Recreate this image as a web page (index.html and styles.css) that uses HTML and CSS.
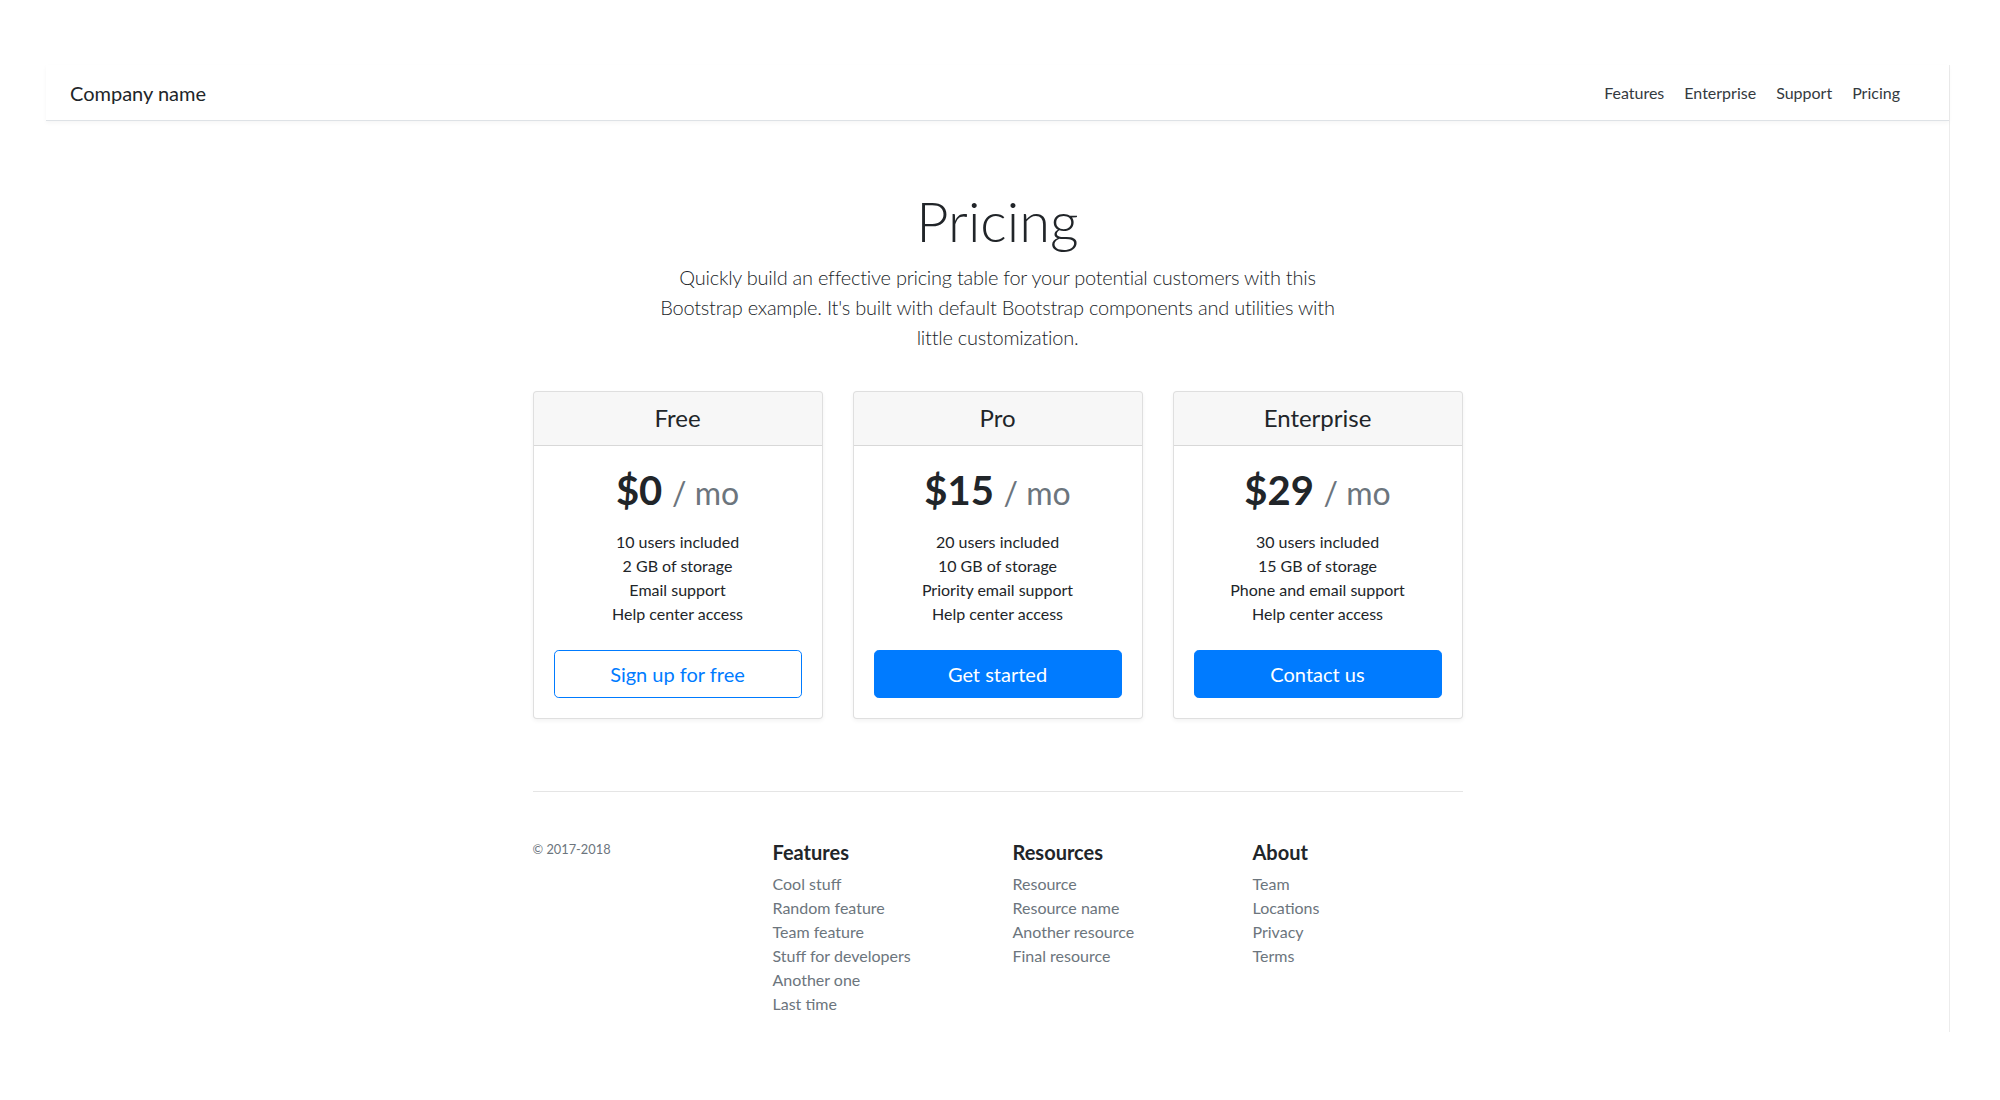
FILE: index.html
```html
<!DOCTYPE html>
<html lang="en">
<head>
<meta charset="utf-8">
<title>Pricing example</title>
<link rel="stylesheet" href="styles.css">
</head>
<body>
<div class="frame">
  <header class="navbar">
    <h5 class="brand">Company name</h5>
    <nav class="nav">
      <a class="nav-link" href="#">Features</a>
      <a class="nav-link" href="#">Enterprise</a>
      <a class="nav-link" href="#">Support</a>
      <a class="nav-link" href="#">Pricing</a>
    </nav>
  </header>

  <section class="pricing-header">
    <h1 class="display">Pricing</h1>
    <p class="lead">Quickly build an effective pricing table for your potential customers with this<br>Bootstrap example. It's built with default Bootstrap components and utilities with<br>little customization.</p>
  </section>

  <div class="container">
    <div class="deck">
      <div class="card">
        <div class="card-header"><h4>Free</h4></div>
        <div class="card-body">
          <h1 class="price">$0 <small>/ mo</small></h1>
          <ul class="features">
            <li>10 users included</li>
            <li>2 GB of storage</li>
            <li>Email support</li>
            <li>Help center access</li>
          </ul>
          <button type="button" class="btn btn-outline">Sign up for free</button>
        </div>
      </div>
      <div class="card">
        <div class="card-header"><h4>Pro</h4></div>
        <div class="card-body">
          <h1 class="price">$15 <small>/ mo</small></h1>
          <ul class="features">
            <li>20 users included</li>
            <li>10 GB of storage</li>
            <li>Priority email support</li>
            <li>Help center access</li>
          </ul>
          <button type="button" class="btn btn-primary">Get started</button>
        </div>
      </div>
      <div class="card">
        <div class="card-header"><h4>Enterprise</h4></div>
        <div class="card-body">
          <h1 class="price">$29 <small>/ mo</small></h1>
          <ul class="features">
            <li>30 users included</li>
            <li>15 GB of storage</li>
            <li>Phone and email support</li>
            <li>Help center access</li>
          </ul>
          <button type="button" class="btn btn-primary">Contact us</button>
        </div>
      </div>
    </div>

    <footer class="footer">
      <div class="footer-col">
        <small class="copy">&copy; 2017-2018</small>
      </div>
      <div class="footer-col">
        <h5>Features</h5>
        <ul class="links">
          <li><a href="#">Cool stuff</a></li>
          <li><a href="#">Random feature</a></li>
          <li><a href="#">Team feature</a></li>
          <li><a href="#">Stuff for developers</a></li>
          <li><a href="#">Another one</a></li>
          <li><a href="#">Last time</a></li>
        </ul>
      </div>
      <div class="footer-col">
        <h5>Resources</h5>
        <ul class="links">
          <li><a href="#">Resource</a></li>
          <li><a href="#">Resource name</a></li>
          <li><a href="#">Another resource</a></li>
          <li><a href="#">Final resource</a></li>
        </ul>
      </div>
      <div class="footer-col">
        <h5>About</h5>
        <ul class="links">
          <li><a href="#">Team</a></li>
          <li><a href="#">Locations</a></li>
          <li><a href="#">Privacy</a></li>
          <li><a href="#">Terms</a></li>
        </ul>
      </div>
    </footer>
  </div>
</div>
</body>
</html>
```

FILE: styles.css
```css
* { box-sizing: border-box; }

html, body {
  margin: 0;
  padding: 0;
  background: #fff;
}

body {
  font-family: "Lato", "Open Sans", "Noto Sans", sans-serif;
  font-size: 16px;
  line-height: 1.5;
  color: #212529;
}

.frame {
  margin: 65px 0 0 46px;
  width: 1904px;
  border-right: 1px solid #ececec;
}

/* Navbar */
.navbar {
  height: 56px;
  display: flex;
  align-items: center;
  padding: 0 39px 0 24px;
  border-bottom: 1px solid #dee2e6;
  box-shadow: 0 2px 4px rgba(0, 0, 0, 0.04);
  background: #fff;
}

.brand {
  margin: 0 auto 0 0;
  font-size: 20px;
  font-weight: 400;
  line-height: 24px;
  color: #212529;
}

.nav {
  display: flex;
}

.nav-link {
  padding: 0 10px;
  color: #343a40;
  text-decoration: none;
  font-size: 16px;
  line-height: 24px;
}

/* Header */
.pricing-header {
  text-align: center;
  padding-top: 66px;
}

.display {
  margin: 0;
  font-size: 56px;
  font-weight: 300;
  line-height: 67px;
  color: #212529;
}

.lead {
  margin: 8px 0 0;
  font-size: 20px;
  font-weight: 300;
  line-height: 30px;
  letter-spacing: -0.25px;
  color: #212529;
}

/* Cards */
.container {
  width: 930px;
  margin: 0 auto;
}

.deck {
  display: grid;
  grid-template-columns: repeat(3, 1fr);
  gap: 30px;
  margin-top: 39px;
  text-align: center;
}

.card {
  border: 1px solid rgba(0, 0, 0, 0.125);
  border-radius: 4px;
  box-shadow: 0 2px 4px rgba(0, 0, 0, 0.05);
  background: #fff;
  overflow: hidden;
}

.card-header {
  padding: 12px 20px;
  background: rgba(0, 0, 0, 0.03);
  border-bottom: 1px solid rgba(0, 0, 0, 0.125);
}

.card-header h4 {
  margin: 0;
  font-size: 24px;
  font-weight: 400;
  line-height: 28.8px;
}

.card-body {
  padding: 20px;
}

.price {
  margin: 0;
  font-size: 40px;
  font-weight: 700;
  line-height: 48px;
  color: #212529;
}

.price small {
  font-size: 32px;
  font-weight: 400;
  line-height: 1.2;
  color: #6c757d;
}

.features {
  list-style: none;
  padding: 0;
  margin: 16px 0 24px;
  font-size: 16px;
  line-height: 24px;
}

.btn {
  display: block;
  width: 100%;
  height: 48px;
  padding: 8px 16px;
  font-family: inherit;
  font-size: 20px;
  line-height: 30px;
  border-radius: 4.8px;
  border: 1px solid #007bff;
  cursor: pointer;
}

.btn-outline {
  background: transparent;
  color: #007bff;
}

.btn-primary {
  background: #007bff;
  color: #fff;
}

/* Footer */
.footer {
  margin-top: 72px;
  padding-top: 48px;
  border-top: 1px solid #e5e5e5;
  display: grid;
  grid-template-columns: 240px 240px 240px 210px;
}

.copy {
  display: block;
  font-size: 12.8px;
  line-height: 19.2px;
  color: #6c757d;
}

.footer-col h5 {
  margin: 0 0 8px;
  font-size: 20px;
  font-weight: 700;
  line-height: 24px;
  color: #212529;
}

.links {
  list-style: none;
  padding: 0;
  margin: 0 0 16px;
  line-height: 24px;
}

.links a {
  color: #6c757d;
  text-decoration: none;
}
```
